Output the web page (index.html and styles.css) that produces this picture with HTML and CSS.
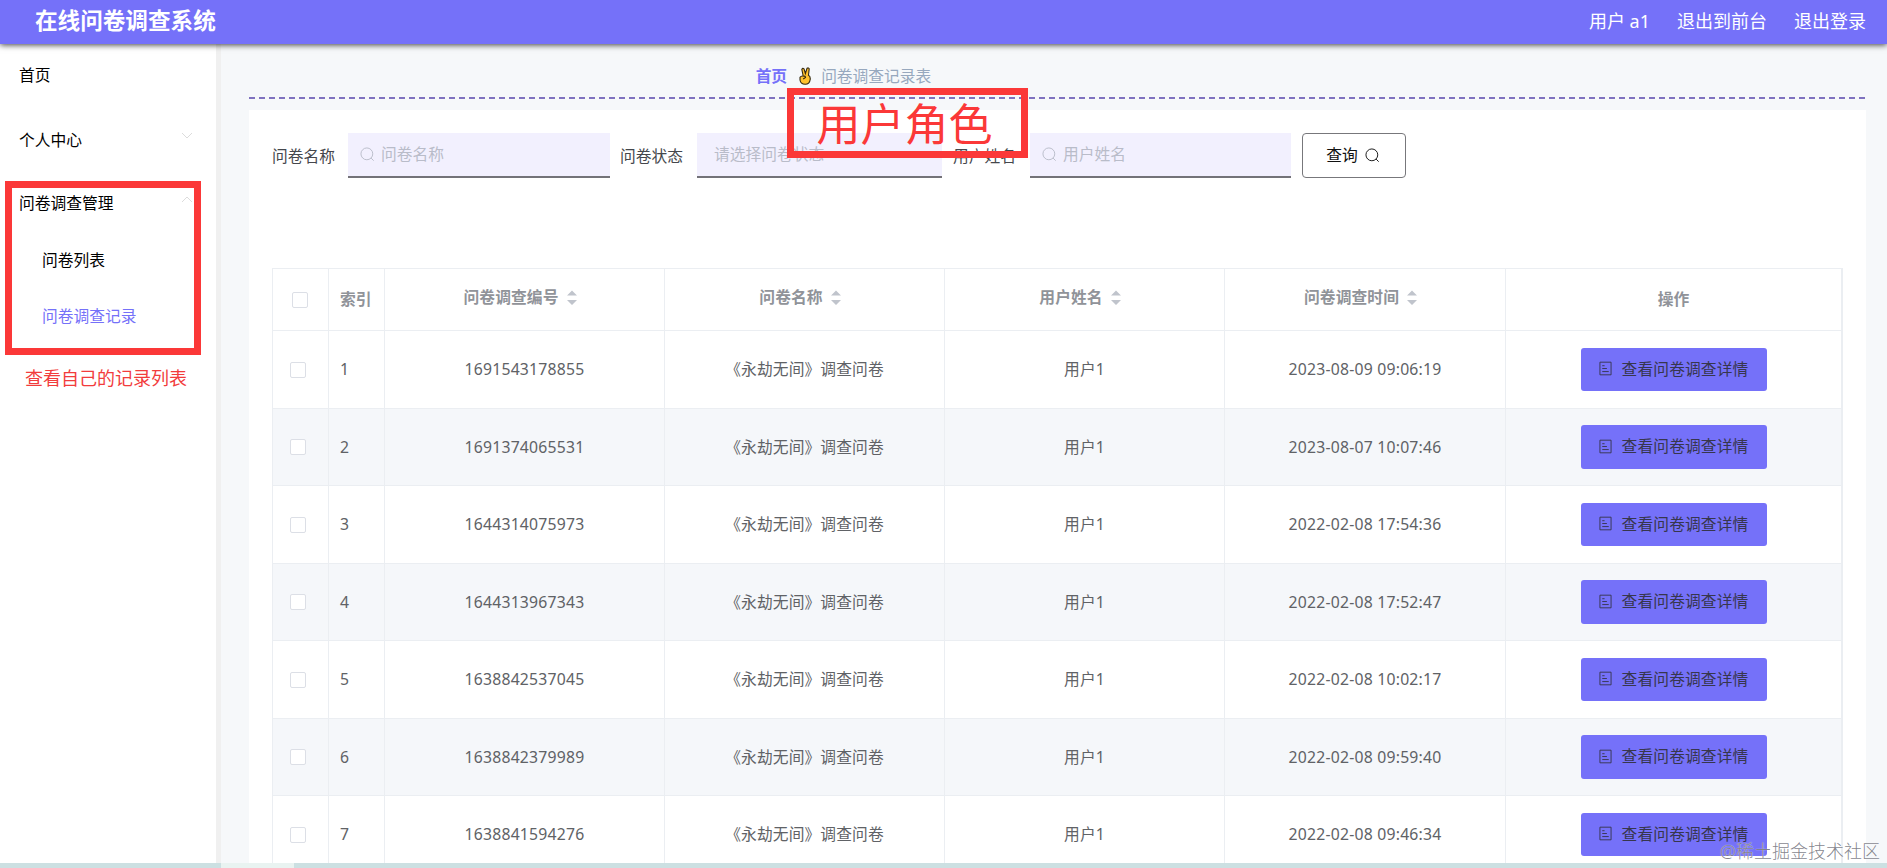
FILE: index.html
```
<!DOCTYPE html>
<html lang="zh-CN">
<head>
<meta charset="utf-8">
<title>在线问卷调查系统</title>
<link rel="stylesheet" href="styles.css">
</head>
<body>
<svg class="defs" aria-hidden="true">
  <symbol id="i-search" viewBox="0 0 16 16"><circle cx="7.3" cy="7.3" r="6.3"/><path d="M11.8 11.8L14.6 14.6"/></symbol>
  <symbol id="i-doc" viewBox="0 0 14 16"><path d="M1 1.2H13V14.8H1Z M3.5 5H6 M3.5 8H8.5 M3.5 11.3H10.5"/></symbol>
  <symbol id="i-down" viewBox="0 0 12 8"><path d="M1 1L6 6L11 1"/></symbol>
  <symbol id="i-sort" viewBox="0 0 10 15"><path d="M0 5.5L5 0.5L10 5.5Z M0 10L5 15L10 10Z"/></symbol>
</svg>
<header class="topbar">
  <h1 class="brand">在线问卷调查系统</h1>
  <nav class="links"><span>用户 a1</span><span>退出到前台</span><span>退出登录</span></nav>
</header>
<div class="body">
  <aside class="side">
    <div class="item home">首页</div>
    <div class="item center">个人中心<svg class="arrow"><use href="#i-down"/></svg></div>
    <div class="item manage">问卷调查管理<svg class="arrow up"><use href="#i-down"/></svg></div>
    <div class="sub">问卷列表</div>
    <div class="sub active">问卷调查记录</div>
    <div class="note">查看自己的记录列表</div>
    <div class="mark mark-menu"></div>
  </aside>
  <main class="main">
    <div class="crumb"><b>首页</b>
      <svg class="hand" viewBox="0 0 12 18"><path d="M4.2 9L2.8 2.4Q3.6 .6 5 1.8L6.4 6.5L8 1.3Q9.6 .3 10.2 1.8L9.5 8.3Q11.6 9.3 11.2 12.5Q10.6 17.2 6.2 17.3Q1.6 17.2 1 13V10.3Q2 8.7 4.2 9Z"/><path d="M4.5 9.5Q6.5 8.5 6.5 10.5L4.2 12"/></svg>
      <span>问卷调查记录表</span></div>
    <div class="dash"></div>
    <section class="panel">
      <form class="search">
        <label>问卷名称</label><div class="input"><svg class="glass"><use href="#i-search"/></svg>问卷名称</div>
        <label>问卷状态</label><div class="input select">请选择问卷状态</div>
        <label>用户姓名</label><div class="input"><svg class="glass"><use href="#i-search"/></svg>用户姓名</div>
        <div class="query">查询<svg class="glass"><use href="#i-search"/></svg></div>
      </form>
      <div class="table" id="table">
        <div class="row head">
          <div class="cell"><i class="box"></i></div><div class="cell idx">索引</div>
          <div class="cell sort">问卷调查编号<svg><use href="#i-sort"/></svg></div>
          <div class="cell sort">问卷名称<svg><use href="#i-sort"/></svg></div>
          <div class="cell sort">用户姓名<svg><use href="#i-sort"/></svg></div>
          <div class="cell sort">问卷调查时间<svg><use href="#i-sort"/></svg></div>
          <div class="cell">操作</div>
        </div>
      </div>
    </section>
    <div class="mark mark-role">用户角色</div>
  </main>
</div>
<div class="hscroll"><div class="thumb"></div></div>
<div class="credit">@稀土掘金技术社区</div>
<script src="rows.js"></script>
</body>
</html>
```
FILE: styles.css
```
* { box-sizing: border-box; }
body {
  margin: 0; height: 868px; overflow: hidden; position: relative;
  display: flex; flex-direction: column; background: #f6f8fa;
  font: 15.75px/20px "Noto Sans", "Noto Sans CJK SC", sans-serif; color: #606266;
}
.defs { position: absolute; width: 0; height: 0; }
svg { fill: none; stroke: currentColor; }
.topbar {
  flex: none; height: 44px; padding: 0 21px 2px 35px; background: #7571f9; color: #fff;
  display: flex; justify-content: space-between; align-items: center;
  box-shadow: 0 1px 6px rgba(0,0,0,.75); position: relative; z-index: 2;
}
.brand { margin: 0; font-size: 22.6px; line-height: 30px; font-weight: 700; }
.links { display: flex; gap: 27px; font-size: 18px; padding-bottom: 1px; }
.body { flex: 1; min-height: 0; display: flex; }
.side { width: 221px; flex: none; background: #fff; border-right: 5px solid #f0f0f0; color: #000; position: relative; padding-top: 21px; }
.item { padding-left: 19px; padding-right: 23px; display: flex; justify-content: space-between; height: 20px; }
.center { margin-top: 45px; }
.manage { margin-top: 43px; }
.arrow { width: 12px; height: 8px; margin-top: 2px; color: #dcdcdc; }
.arrow.up { transform: scaleY(-1); }
.sub { padding-left: 42px; margin-top: 37px; }
.sub + .sub { margin-top: 36px; }
.active { color: #7571f9; }
.note { color: #f23c3c; font-size: 18px; padding-left: 25px; margin-top: 42px; }
.mark { position: absolute; border: 7px solid #fb3838; }
.mark-menu { left: 5px; top: 137px; width: 196px; height: 174px; }
.mark-role {
  left: 566px; top: 44px; width: 241px; height: 70px; color: #fb3838;
  font-size: 44px; line-height: 58px; text-align: center; padding-right: 6px;
}
.main { flex: 1; min-width: 0; padding: 0 21px 0 28px; position: relative; display: flex; flex-direction: column; }
.crumb { height: 53px; padding-top: 10px; display: flex; align-items: center; justify-content: center; padding-right: 428px; color: #97a8be; }
.crumb b { color: #7571f9; }
.hand { width: 12px; height: 18px; margin: 0 10px 0 12px; fill: #ffc12d; stroke: #33280f; stroke-width: 1.1; }
.dash { height: 2px; background: repeating-linear-gradient(90deg, #7f72bf 0 6px, transparent 6px 10px); }
.panel { margin-top: 11px; background: #fff; padding: 23px 24px 0 23px; flex: 1; min-height: 0; overflow: hidden; }
.search { display: flex; height: 45px; margin-bottom: 90px; }
.search label { width: 76px; line-height: 47px; color: #45474c; flex: none; }
.input { flex: none; width: 262px; height: 45px; padding: 0 0 1px 12px; background: #f2f0fe; border-bottom: 2px solid #737278; display: flex; align-items: center; color: #b9bcc9; margin-right: 10px; }
.input .glass { margin-right: 6px; }
.search label:nth-of-type(2) { width: 77px; }
.search label:nth-of-type(3) { width: 78px; padding-left: 1px; }
.select { width: 245px; padding-left: 17px; }
.glass { width: 15px; height: 15px; }
.query { width: 104px; height: 45px; margin-left: 1px; padding: 0 2px 1px 0; border: 1px solid #77777b; border-radius: 4px; color: #111; display: flex; align-items: center; justify-content: center; gap: 7px; }
.search .input:nth-last-child(2) { width: 261px; }
.table { border: 1px solid #ebeef2; border-right-width: 2px; width: 1571px; }
.row { display: grid; grid-template-columns: 56px 56px 280px 280px 280px 281px 1fr; height: 77.5px; border-bottom: 1px solid #ebeef2; }
.row.head { height: 62px; font-weight: 700; color: #909399; }
.row.even { background: #f5f7fa; }
.cell { display: flex; align-items: center; justify-content: center; border-right: 1px solid #ebeef2; letter-spacing: .1px; }
.row:not(.head) .cell:nth-child(3), .row:not(.head) .cell:nth-child(6) { letter-spacing: .22px; }
.cell:last-child { border-right: 0; }
.cell.idx { justify-content: flex-start; padding-left: 11px; }
.head .cell { padding-bottom: 2px; }
.sort svg { width: 10px; height: 15px; margin-left: 8px; fill: #c0c4cc; stroke: none; }
.head .sort { padding: 0 9px 5px 0; }
.box { width: 16px; height: 16px; background: #fff; border: 1px solid #dcdfe6; border-radius: 2px; }
.head .box { margin: 3px 1px 0 0; }
.row:not(.head) .box { margin: 1px 5px 0 0; }
.view { width: 186px; height: 43.5px; padding-bottom: 1px; border-radius: 3px; background: #7571f9; color: #37364d; display: flex; align-items: center; justify-content: center; gap: 10px; }
.view svg { width: 13px; height: 15px; }
.hscroll { flex: none; height: 5px; background: #cce0e2; padding-left: 221px; }
.thumb { width: 73px; height: 5px; background: #e9f3f1; }
.credit { position: absolute; right: 7px; bottom: 7px; font-size: 18px; color: rgba(110,110,120,.85); text-shadow: 0 0 1px #fff; font-weight: 300; }
```
FILE: rows.js
```
const records = [
  ['1691543178855', '2023-08-09 09:06:19'],
  ['1691374065531', '2023-08-07 10:07:46'],
  ['1644314075973', '2022-02-08 17:54:36'],
  ['1644313967343', '2022-02-08 17:52:47'],
  ['1638842537045', '2022-02-08 10:02:17'],
  ['1638842379989', '2022-02-08 09:59:40'],
  ['1638841594276', '2022-02-08 09:46:34']
];
document.getElementById('table').insertAdjacentHTML('beforeend', records.map(([no, time], i) => `
  <div class="row${i % 2 ? ' even' : ''}">
    <div class="cell"><i class="box"></i></div><div class="cell idx">${i + 1}</div>
    <div class="cell">${no}</div><div class="cell">《永劫无间》调查问卷</div>
    <div class="cell">用户1</div><div class="cell">${time}</div>
    <div class="cell"><div class="view"><svg><use href="#i-doc"/></svg>查看问卷调查详情</div></div>
  </div>`).join(''));
```
